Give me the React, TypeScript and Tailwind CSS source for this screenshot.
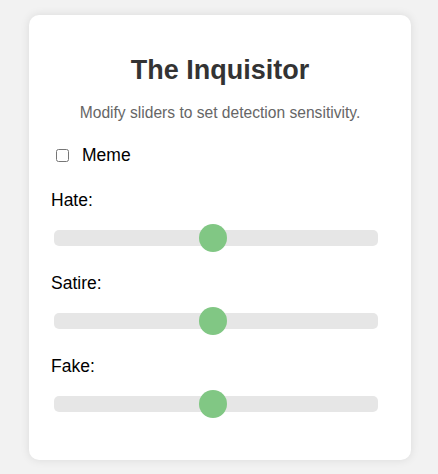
import React, { useState } from "react";

const sliders = ["Hate", "Satire", "Fake"];

const rangeClass =
  "block h-4 w-[324px] ml-[3px] appearance-none rounded-[5px] bg-[#e6e6e6] outline-none cursor-pointer " +
  "[&::-webkit-slider-thumb]:appearance-none [&::-webkit-slider-thumb]:w-7 [&::-webkit-slider-thumb]:h-7 " +
  "[&::-webkit-slider-thumb]:rounded-full [&::-webkit-slider-thumb]:bg-[#81c784] " +
  "[&::-moz-range-thumb]:w-7 [&::-moz-range-thumb]:h-7 [&::-moz-range-thumb]:rounded-full " +
  "[&::-moz-range-thumb]:border-0 [&::-moz-range-thumb]:bg-[#81c784]";

export default function App() {
  const [meme, setMeme] = useState(false);
  const [values, setValues] = useState<Record<string, number>>({ Hate: 49, Satire: 49, Fake: 49 });

  return (
    <div className="min-h-[474px] bg-[#f2f2f2] pt-[15px] font-['Liberation_Sans',Arial,sans-serif]">
      <div className="ml-[29px] w-[382px] rounded-[10px] bg-white pl-[22px] pr-[22px] pt-[39px] pb-[42px] shadow-[0_0_10px_rgba(0,0,0,0.1)]">
        <h1 className="text-center text-[27px] font-bold leading-[32px] text-[#333]">The Inquisitor</h1>
        <p className="mt-[17px] text-center text-[15.6px] leading-[20px] text-[#666]">
          Modify sliders to set detection sensitivity.
        </p>

        <label className="mt-[21px] flex h-[22px] items-center text-[17.5px] leading-[22px] text-black">
          <input
            type="checkbox"
            checked={meme}
            onChange={(e) => setMeme(e.target.checked)}
            className="ml-[5px] mr-[13px] h-[13px] w-[13px]"
          />
          Meme
        </label>

        <div className="mt-[23px]">
          {sliders.map((name, i) => (
            <div key={name} className={i > 0 ? "mt-[20px]" : ""}>
              <div className="text-[17.5px] leading-[22px] text-black">{name}:</div>
              <div className="mt-[13px] flex h-7 items-center">
                <input
                  type="range"
                  min={0}
                  max={100}
                  value={values[name]}
                  onChange={(e) => setValues({ ...values, [name]: Number(e.target.value) })}
                  className={rangeClass}
                />
              </div>
            </div>
          ))}
        </div>
      </div>
    </div>
  );
}
